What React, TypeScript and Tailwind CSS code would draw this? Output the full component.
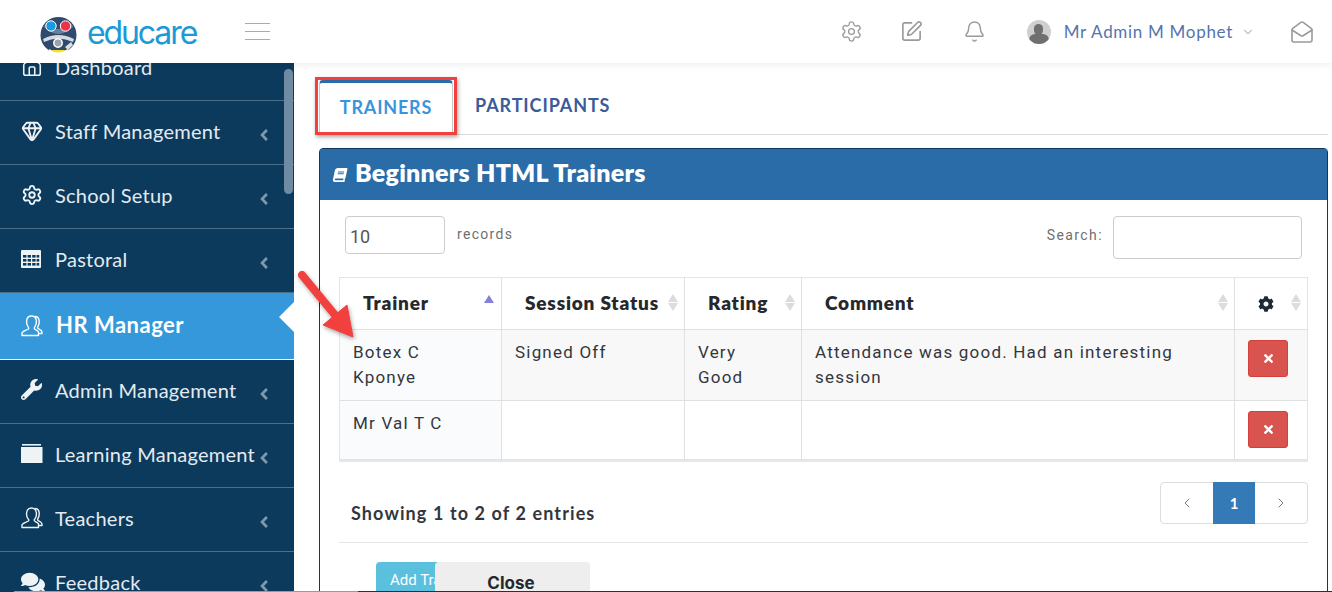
import { Home, Gem, Settings, SquarePen, Bell, MailOpen, ChevronDown, ChevronLeft, ChevronRight } from 'lucide-react'
import { FaAngleLeft, FaBook, FaCog, FaComments, FaTimes, FaWrench } from 'react-icons/fa'
import type { ReactNode } from 'react'

const heading = "font-['Lato',sans-serif]"
const body = "font-['Roboto',Arial,sans-serif]"

function SortArrows() {
  return (
    <span className="absolute right-[6px] top-[16px] flex flex-col gap-[1px]">
      <span className="w-0 h-0 border-x-[5px] border-x-transparent border-b-[8px] border-b-[#dcdcdc]" />
      <span className="w-0 h-0 border-x-[5px] border-x-transparent border-t-[8px] border-t-[#dcdcdc]" />
    </span>
  )
}

function Logo() {
  return (
    <svg width="37" height="36" viewBox="0 0 37 36">
      <circle cx="18.5" cy="18" r="18" fill="#2f4a6d" />
      <path d="M6 6 Q18 18 31 6 L33 10 Q18 24 4 10Z" fill="#6b8099" />
      <path d="M3 22 Q18 14 34 22 L33 25 Q18 18 4 25Z" fill="#fff" opacity="0.8" />
      <circle cx="11" cy="9" r="5.2" fill="#1a9be0" stroke="#fff" strokeWidth="1" />
      <circle cx="25.5" cy="9" r="5.2" fill="#ee3048" stroke="#fff" strokeWidth="1" />
      <circle cx="18" cy="26" r="4.2" fill="#9aa3ad" stroke="#fff" strokeWidth="1.5" />
      <path d="M9 32 Q18 38 28 32 L28 36 L9 36Z" fill="#fff" />
      <path d="M11 33 H26 Q18 38 11 33Z" fill="#f4e31e" />
      <path d="M25 30 L31 25 L33 28 L28 33Z" fill="#d9dfe6" />
    </svg>
  )
}

function UsersOutline({ size = 22 }: { size?: number }) {
  return (
    <svg width={size} height={size} viewBox="0 0 22 22" fill="none" stroke="currentColor" strokeWidth="1.4" strokeLinejoin="round">
      <path d="M1 20.5 V18 C1 16 5 15.5 7.5 14 C8 13.2 7.8 12.6 7.2 12 C5.6 10 5.4 7.8 5.6 5.8 C6 2.8 8 1 10.5 1 C13 1 15 2.8 15.4 5.8 C15.6 7.8 15.4 10 13.8 12 C13.2 12.6 13 13.2 13.5 14 C15 15 17 15.6 17.5 17 V20.5 Z" />
      <path d="M14 1.5 C16.5 1.5 18 3.5 18.2 6 C18.4 8 18 10 16.8 11.8 C16.4 12.6 16.6 13.2 17.2 13.6 C18.6 14.4 21 15 21 17 V18.5 H18" />
    </svg>
  )
}

function TableIcon() {
  return (
    <svg width="20" height="18" viewBox="0 0 20 18" fill="currentColor">
      <path d="M1 0 H19 A1 1 0 0 1 20 1 V17 A1 1 0 0 1 19 18 H1 A1 1 0 0 1 0 17 V1 A1 1 0 0 1 1 0 Z" />
      <g fill="#0c3a5c">
        <rect x="2" y="5" width="3.4" height="2.6" /><rect x="6.6" y="5" width="3.4" height="2.6" /><rect x="11.2" y="5" width="3.4" height="2.6" /><rect x="15.6" y="5" width="2.6" height="2.6" />
        <rect x="2" y="9" width="3.4" height="2.6" /><rect x="6.6" y="9" width="3.4" height="2.6" /><rect x="11.2" y="9" width="3.4" height="2.6" /><rect x="15.6" y="9" width="2.6" height="2.6" />
        <rect x="2" y="13" width="3.4" height="2.6" /><rect x="6.6" y="13" width="3.4" height="2.6" /><rect x="11.2" y="13" width="3.4" height="2.6" /><rect x="15.6" y="13" width="2.6" height="2.6" />
      </g>
    </svg>
  )
}

function ArchiveIcon() {
  return (
    <svg width="22" height="19" viewBox="0 0 22 19" fill="currentColor">
      <rect x="1" y="0" width="19" height="1.6" />
      <path d="M0 3 H21.5 V19 H0 Z" />
    </svg>
  )
}

function NavItem({ icon, label, clipped }: { icon: ReactNode; label: string; clipped?: boolean }) {
  return (
    <li className={`${clipped ? 'h-[64px] -mt-[26px]' : 'h-[64px]'} pb-[4px] flex items-center border-b border-[#4d7089] relative`}>
      <span className="w-[55px] pl-[21px] flex-none text-[#eef3f6]">{icon}</span>
      <span className={`${heading} text-[20px] tracking-[0.25px] text-[#e4ebf0] whitespace-nowrap`}>{label}</span>
      {!clipped && <FaAngleLeft size={18} className="absolute left-[255px] top-[25px] text-[#7f97a8]" />}
    </li>
  )
}

function DeleteButton() {
  return (
    <button className="w-[40px] h-[37px] rounded-[3px] bg-[#d9534f] border border-[#d43f3a] flex items-center justify-center text-white">
      <FaTimes size={13} />
    </button>
  )
}

export default function App() {
  return (
    <div className={`relative w-[1332px] h-[592px] overflow-hidden bg-white flex flex-col ${body}`}>
      {/* Top bar */}
      <header className="relative z-10 h-[63px] flex-none bg-white flex items-center shadow-[0_1px_8px_rgba(0,0,0,0.08)]">
        <div className="ml-[40px] mt-[6px]"><Logo /></div>
        <span className="ml-[10px] mt-[3px] font-['Inter',sans-serif] text-[32px] tracking-[-2.1px] text-[#1b9ad6] leading-none">educare</span>
        <div className="ml-[49px] w-[25px] flex flex-col gap-[7px]">
          <span className="h-px bg-[#aaaaaa]" />
          <span className="h-px bg-[#aaaaaa]" />
          <span className="h-px bg-[#aaaaaa]" />
        </div>
        <div className="ml-auto flex items-center text-[#9a9a9a]">
          <Settings size={23} strokeWidth={1.4} />
          <SquarePen size={23} strokeWidth={1.7} className="ml-[37px]" />
          <Bell size={23} strokeWidth={1.5} className="ml-[40px]" />
          <span className="ml-[41px] w-[24px] h-[24px] rounded-full bg-[#cfcfcf] overflow-hidden flex flex-col items-center">
            <span className="mt-[4px] w-[9px] h-[11px] rounded-full bg-[#6f6f6f]" />
            <span className="-mt-[1px] w-[20px] h-[10px] rounded-t-[6px] bg-[#6f6f6f]" />
          </span>
          <span className={`${heading} ml-[13px] text-[17px] tracking-[0.7px] text-[#5474ae]`}>Mr Admin M Mophet</span>
          <ChevronDown size={14} className="ml-[8px] text-[#c4c4c4]" />
          <MailOpen size={24} strokeWidth={1.6} className="ml-[35px] mr-[18px]" />
        </div>
      </header>

      <div className="flex flex-1 min-h-0">
        {/* Sidebar */}
        <aside className="relative w-[294px] flex-none bg-[#0c3a5c] overflow-hidden">
          <ul>
            <NavItem clipped icon={<Home size={22} strokeWidth={1.7} />} label="Dashboard" />
            <NavItem icon={<Gem size={22} strokeWidth={2} />} label="Staff Management" />
            <NavItem icon={<Settings size={22} strokeWidth={2} />} label="School Setup" />
            <NavItem icon={<TableIcon />} label="Pastoral" />
            <li className="relative h-[67px] bg-[#3498db] border-b border-white flex items-center">
              <span className="w-[56px] pl-[21px] flex-none text-white"><UsersOutline /></span>
              <span className={`${heading} mb-[3px] text-[22px] font-bold tracking-[0.5px] text-white`}>HR Manager</span>
              <span className="absolute right-0 top-[9px] w-0 h-0 border-y-[15px] border-y-transparent border-r-[15px] border-r-white" />
            </li>
            <NavItem icon={<FaWrench size={21} />} label="Admin Management" />
            <NavItem icon={<ArchiveIcon />} label="Learning Management" />
            <NavItem icon={<UsersOutline />} label="Teachers" />
            <NavItem icon={<FaComments size={24} />} label="Feedback" />
          </ul>
          {/* scrollbar */}
          <div className="absolute left-[284px] top-[6px] w-[9px] h-[125px] rounded-full bg-[#6f8ba1]" />
        </aside>

        {/* Main */}
        <main className="flex-1 min-w-0 bg-white pl-[25px] pr-[4px] pt-[17px]">
          <nav className="h-[55px] border-b border-[#dddddd] flex">
            <div className={`${heading} w-[134px] h-[55px] pb-[4px] border-t-[3px] border-x border-t-[#2a6ca8] border-x-[#c8c8c8] rounded-t-[4px] bg-white flex items-center justify-center text-[18px] font-bold tracking-[0.8px] text-[#3a94dc]`}>
              TRAINERS
            </div>
            <div className={`${heading} ml-[22px] mb-[4px] flex items-center text-[18px] font-bold tracking-[0.9px] text-[#3b5b99]`}>
              PARTICIPANTS
            </div>
          </nav>

          <section className="mt-[13px] h-[600px] border border-[#0f3a5c] rounded-t-[4px]">
            <h2 className="h-[51px] bg-[#2a6ca8] pb-[3px] flex items-center pl-[13px] text-white">
              <FaBook size={14} className="-skew-x-12 mt-[3px]" />
              <span className={`${heading} ml-[8px] text-[25px] font-extrabold tracking-[0.25px]`}>Beginners HTML Trainers</span>
            </h2>

            <div className="px-[19px]">
              <div className="pt-[16px] h-[77px] flex items-start">
                <div className="ml-[6px] w-[100px] h-[38px] pt-[2px] border border-[#cccccc] rounded-[4px] flex items-center pl-[4px] text-[18px] text-[#555555]">10</div>
                <span className="ml-[12px] mt-[8px] text-[14px] tracking-[1.3px] text-[#6f6f6f]">records</span>
                <span className="ml-auto mt-[9px] text-[14px] tracking-[1.4px] text-[#6f6f6f]">Search:</span>
                <div className="ml-[10px] mr-[6px] w-[189px] h-[43px] border border-[#cccccc] rounded-[4px]" />
              </div>

              <table className="w-[968px] table-fixed border-collapse border border-[#e4e4e4] text-[17px] tracking-[1.2px] text-[#33373d] leading-[25px]">
                <colgroup>
                  <col className="w-[162px]" />
                  <col className="w-[183px]" />
                  <col className="w-[117px]" />
                  <col className="w-[433px]" />
                  <col className="w-[73px]" />
                </colgroup>
                <thead>
                  <tr className={`${heading} h-[52px] text-[19px] tracking-[0.8px] text-[#26282c] border-b border-[#e0e0e0]`}>
                    <th className="relative text-left pl-[23px] pb-[2px] border-r border-[#e0e0e0] font-extrabold">Trainer<span className="absolute right-[7px] top-[17px] w-0 h-0 border-x-[5px] border-x-transparent border-b-[8px] border-b-[#8480d8]" /></th>
                    <th className="relative text-left pl-[23px] pb-[2px] border-r border-[#e0e0e0] font-extrabold whitespace-nowrap">Session Status<SortArrows /></th>
                    <th className="relative text-left pl-[23px] pb-[2px] border-r border-[#e0e0e0] font-extrabold">Rating<SortArrows /></th>
                    <th className="relative text-left pl-[23px] pb-[2px] border-r border-[#e0e0e0] font-extrabold">Comment<SortArrows /></th>
                    <th className="relative"><FaCog size={16} className="ml-[23px] text-[#1e2a38]" /><SortArrows /></th>
                  </tr>
                </thead>
                <tbody>
                  <tr className="h-[71px] border-b border-[#e0e0e0] bg-[#f8f8f8] align-top">
                    <td className="pl-[13px] pt-[10px] bg-[#fafbfd] border-r border-[#e0e0e0]">Botex C<br />Kponye</td>
                    <td className="pl-[13px] pt-[10px] border-r border-[#e0e0e0]">Signed Off</td>
                    <td className="pl-[13px] pt-[10px] border-r border-[#e0e0e0]">Very<br />Good</td>
                    <td className="pl-[13px] pt-[10px] border-r border-[#e0e0e0]">Attendance was good. Had an interesting<br />session</td>
                    <td className="pl-[13px] pt-[10px]"><DeleteButton /></td>
                  </tr>
                  <tr className="h-[59px] align-top">
                    <td className="pl-[13px] pt-[10px] bg-[#fafbfd] border-r border-[#e0e0e0]">Mr Val T C</td>
                    <td className="border-r border-[#e0e0e0]" />
                    <td className="border-r border-[#e0e0e0]" />
                    <td className="border-r border-[#e0e0e0]" />
                    <td className="pl-[13px] pt-[10px]"><DeleteButton /></td>
                  </tr>
                </tbody>
              </table>

              <div className="h-[83px] border-b border-[#e4e4e4] flex items-start border-t-2 border-t-[#e4e8ec] w-[969px]">
                <span className={`${heading} ml-[12px] mt-[38px] text-[18px] font-bold tracking-[1.1px] text-[#33373d]`}>Showing 1 to 2 of 2 entries</span>
                <div className="ml-auto mt-[20px] h-[42px] w-[148px] border border-[#dddddd] rounded-[4px] flex">
                  <span className="w-[52px] flex items-center justify-center text-[#7a7a7a]"><ChevronLeft size={16} strokeWidth={1.5} /></span>
                  <span className={`${heading} w-[42px] -my-px bg-[#337ab7] flex items-center justify-center text-[15px] font-bold text-white`}>1</span>
                  <span className="flex-1 flex items-center justify-center text-[#7a7a7a]"><ChevronRight size={16} strokeWidth={1.5} /></span>
                </div>
              </div>

              <button className="ml-[37px] mt-[19px] w-[100px] h-[40px] rounded-[4px] bg-[#5bc0de] text-left pl-[14px] pb-[4px] text-[15px] text-white">Add Trainer</button>
            </div>
          </section>
        </main>
      </div>

      {/* Modal footer button overlapping the page */}
      <button className="absolute left-[435px] top-[562px] w-[155px] h-[40px] rounded-[4px] bg-[#eeeeee] pt-[3px] pr-[3px] font-['Inter',sans-serif] text-[17px] font-bold text-[#26282c]">Close</button>
      <div className="absolute left-[14px] right-0 bottom-0 h-px bg-[#9a9a9a]" />
      <div className="absolute left-[358px] right-0 bottom-0 h-px bg-[#2b2f36]" />

      {/* Annotation: red box and arrow */}
      <div className="absolute left-[315px] top-[77px] w-[142px] h-[58px] border-[3px] border-[#f2403f] shadow-[1px_2px_4px_rgba(0,0,0,0.35)]" />
      <svg className="absolute left-[296px] top-[270px] drop-shadow-[1px_2px_2px_rgba(0,0,0,0.35)]" width="62" height="70" viewBox="0 0 62 70">
        <path d="M6 5 L39 45" stroke="#f2403f" strokeWidth="8" strokeLinecap="round" />
        <path d="M51 35 L57 67 L27 55 Z" fill="#f2403f" stroke="#f2403f" strokeWidth="1" strokeLinejoin="round" />
      </svg>
    </div>
  )
}
